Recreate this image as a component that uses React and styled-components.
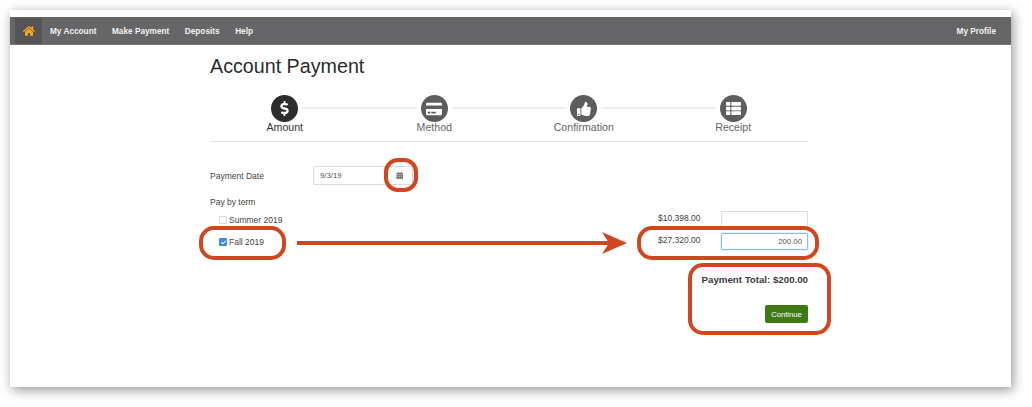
import React from 'react';
import styled, { createGlobalStyle } from 'styled-components';
import { FaHome, FaDollarSign, FaCreditCard, FaThumbsUp, FaThList, FaCalendarAlt, FaCheck } from 'react-icons/fa';

const GlobalStyle = createGlobalStyle`
  html, body {
    margin: 0;
    padding: 0;
    background: #fff;
  }
  body {
    font-family: "Liberation Sans", Arial, sans-serif;
    color: #333;
  }
`;

const Stage = styled.div`
  position: relative;
  width: 1032px;
  height: 407px;
  padding: 10px 21px 20px 10px;
  box-sizing: border-box;
  overflow: hidden;
`;

const Window = styled.div`
  height: 377px;
  padding-top: 7px;
  box-sizing: border-box;
  background: #fff;
  box-shadow: 2px 3px 11px rgba(0, 0, 0, 0.42);
`;

const Nav = styled.nav`
  display: flex;
  align-items: center;
  height: 28px;
  padding: 0 15px 0 5px;
  background: #666567;
  border-bottom: 1px solid #777;
  box-sizing: border-box;
`;

const HomeLink = styled.div`
  display: flex;
  align-items: center;
  justify-content: center;
  width: 27px;
  height: 26px;
  margin-right: 8px;
  background: #555456;
  color: #f9a61a;
  font-size: 12px;
`;

const NavLink = styled.span`
  margin-right: 15.5px;
  padding-top: 1px;
  color: #fff;
  font-size: 8.25px;
  font-weight: 700;
  opacity: 0.92;
`;

const NavRight = styled(NavLink)`
  margin: 0 0 0 auto;
`;

const Content = styled.main`
  width: 598px;
  margin-left: 200px;
`;

const Title = styled.h1`
  margin: 10px 0 0;
  font-size: 19.7px;
  line-height: 22px;
  font-weight: 400;
  color: #2b2b2b;
`;

const Stepper = styled.div`
  display: grid;
  grid-template-columns: repeat(4, 149.5px);
  margin-top: 18px;
  height: 46px;
  border-bottom: 1px solid #e2e2e2;
`;

const Step = styled.div`
  position: relative;
  display: flex;
  flex-direction: column;
  align-items: center;

  &:not(:last-child)::after {
    content: '';
    position: absolute;
    top: 12px;
    left: 92px;
    width: 115px;
    height: 2px;
    background: #eeeeee;
  }
`;

const StepIcon = styled.div`
  display: flex;
  align-items: center;
  justify-content: center;
  width: 27px;
  height: 27px;
  border-radius: 50%;
  background: ${(p) => (p.$active ? '#2d2d2d' : '#5d5d5d')};
  color: #fff;
  font-size: ${(p) => p.$size || 14}px;
`;

const StepLabel = styled.span`
  margin-top: -1px;
  font-size: 10.6px;
  line-height: 12px;
  color: ${(p) => (p.$active ? '#333' : '#666')};
`;

const DateRow = styled.div`
  display: flex;
  align-items: center;
  margin-top: 24px;
  height: 19px;
`;

const FieldLabel = styled.label`
  width: 103px;
  font-size: 8.5px;
  color: #444;
`;

const DateInput = styled.div`
  width: 74px;
  height: 19px;
  padding-left: 6px;
  box-sizing: border-box;
  border: 1px solid #dcdcdc;
  border-radius: 2px 0 0 2px;
  font-size: 7.8px;
  line-height: 17px;
  color: #555;
`;

const CalendarButton = styled.div`
  display: flex;
  align-items: center;
  justify-content: center;
  width: 26px;
  height: 19px;
  box-sizing: border-box;
  border: 1px solid #dcdcdc;
  border-left: none;
  border-radius: 0 2px 2px 0;
  color: #666;
  font-size: 7.5px;
`;

const TermHeading = styled.div`
  margin-top: 12px;
  font-size: 8.5px;
  line-height: 10px;
  color: #444;
`;

const TermRows = styled.div`
  display: flex;
  flex-direction: column;
  gap: 5px;
  margin-top: 4px;
`;

const TermRow = styled.div`
  display: flex;
  align-items: center;
  height: 17px;
  padding-left: 9px;
`;

const Check = styled.span`
  display: flex;
  align-items: center;
  justify-content: center;
  width: 6px;
  height: 6px;
  margin: 1px 2px 0 0;
  border: 1px solid ${(p) => (p.$checked ? '#3b88ee' : '#d8d8d8')};
  border-radius: 1px;
  background: ${(p) => (p.$checked ? '#3b88ee' : '#fff')};
  color: #fff;
  font-size: 5px;
`;

const TermName = styled.span`
  flex: 1;
  font-size: 8.5px;
  color: #444;
`;

const Amount = styled.span`
  margin: 0 20.5px 3px 0;
  font-size: 8.5px;
  color: #444;
`;

const AmountInput = styled.div`
  width: 87px;
  height: 17px;
  padding-right: 5px;
  box-sizing: border-box;
  border: 1px solid ${(p) => (p.$focus ? '#86bdf0' : '#dcdcdc')};
  border-radius: 1px;
  box-shadow: ${(p) => (p.$focus ? '0 0 2px rgba(102, 175, 233, 0.6)' : 'none')};
  font-size: 7.8px;
  line-height: 15px;
  text-align: right;
  color: #555;
`;

const Summary = styled.div`
  display: flex;
  flex-direction: column;
  align-items: flex-end;
  margin-top: 24px;
`;

const Total = styled.div`
  font-size: 9.7px;
  line-height: 12px;
  font-weight: 700;
  color: #3a3a3a;
`;

const ContinueButton = styled.button`
  width: 43px;
  height: 18px;
  margin-top: 19px;
  padding: 0;
  border: none;
  border-radius: 2px;
  background: #3f7a17;
  color: #fff;
  font-family: inherit;
  font-size: 7.6px;
`;

/* red call-outs drawn over the screenshot */
const Ring = styled.div`
  position: absolute;
  left: ${(p) => p.$x}px;
  top: ${(p) => p.$y}px;
  width: ${(p) => p.$w}px;
  height: ${(p) => p.$h}px;
  box-sizing: border-box;
  border: 4px solid #d0461f;
  border-radius: ${(p) => p.$r || 14}px;
`;

const ArrowArt = styled.svg`
  position: absolute;
  left: 296px;
  top: 231px;
`;

const steps = [
  { label: 'Amount', Icon: FaDollarSign, active: true, size: 15 },
  { label: 'Method', Icon: FaCreditCard, size: 16 },
  { label: 'Confirmation', Icon: FaThumbsUp, size: 14 },
  { label: 'Receipt', Icon: FaThList, size: 15 },
];

const App = () => (
  <>
    <GlobalStyle />
    <Stage>
      <Window>
        <Nav>
          <HomeLink><FaHome /></HomeLink>
          <NavLink>My Account</NavLink>
          <NavLink>Make Payment</NavLink>
          <NavLink>Deposits</NavLink>
          <NavLink>Help</NavLink>
          <NavRight>My Profile</NavRight>
        </Nav>
        <Content>
          <Title>Account Payment</Title>
          <Stepper>
            {steps.map(({ label, Icon, active, size }) => (
              <Step key={label}>
                <StepIcon $active={active} $size={size}><Icon /></StepIcon>
                <StepLabel $active={active}>{label}</StepLabel>
              </Step>
            ))}
          </Stepper>
          <DateRow>
            <FieldLabel>Payment Date</FieldLabel>
            <DateInput>9/3/19</DateInput>
            <CalendarButton><FaCalendarAlt /></CalendarButton>
          </DateRow>
          <TermHeading>Pay by term</TermHeading>
          <TermRows>
            <TermRow>
              <Check />
              <TermName>Summer 2019</TermName>
              <Amount>$10,398.00</Amount>
              <AmountInput />
            </TermRow>
            <TermRow>
              <Check $checked><FaCheck /></Check>
              <TermName>Fall 2019</TermName>
              <Amount>$27,320.00</Amount>
              <AmountInput $focus>200.00</AmountInput>
            </TermRow>
          </TermRows>
          <Summary>
            <Total>Payment Total: $200.00</Total>
            <ContinueButton>Continue</ContinueButton>
          </Summary>
        </Content>
      </Window>
      <Ring $x={384} $y={158} $w={34} $h={34} $r={14} />
      <Ring $x={199} $y={226} $w={87} $h={34} $r={15} />
      <Ring $x={637} $y={226} $w={182} $h={34} $r={15} />
      <Ring $x={688} $y={263} $w={143} $h={72} $r={15} />
      <ArrowArt width="332" height="24" viewBox="0 0 332 24">
        <rect x="1" y="10" width="312" height="4" fill="#d0461f" />
        <path d="M306 1 L331 12 L306 23 L313 12 Z" fill="#d0461f" />
      </ArrowArt>
    </Stage>
  </>
);

export default App;
